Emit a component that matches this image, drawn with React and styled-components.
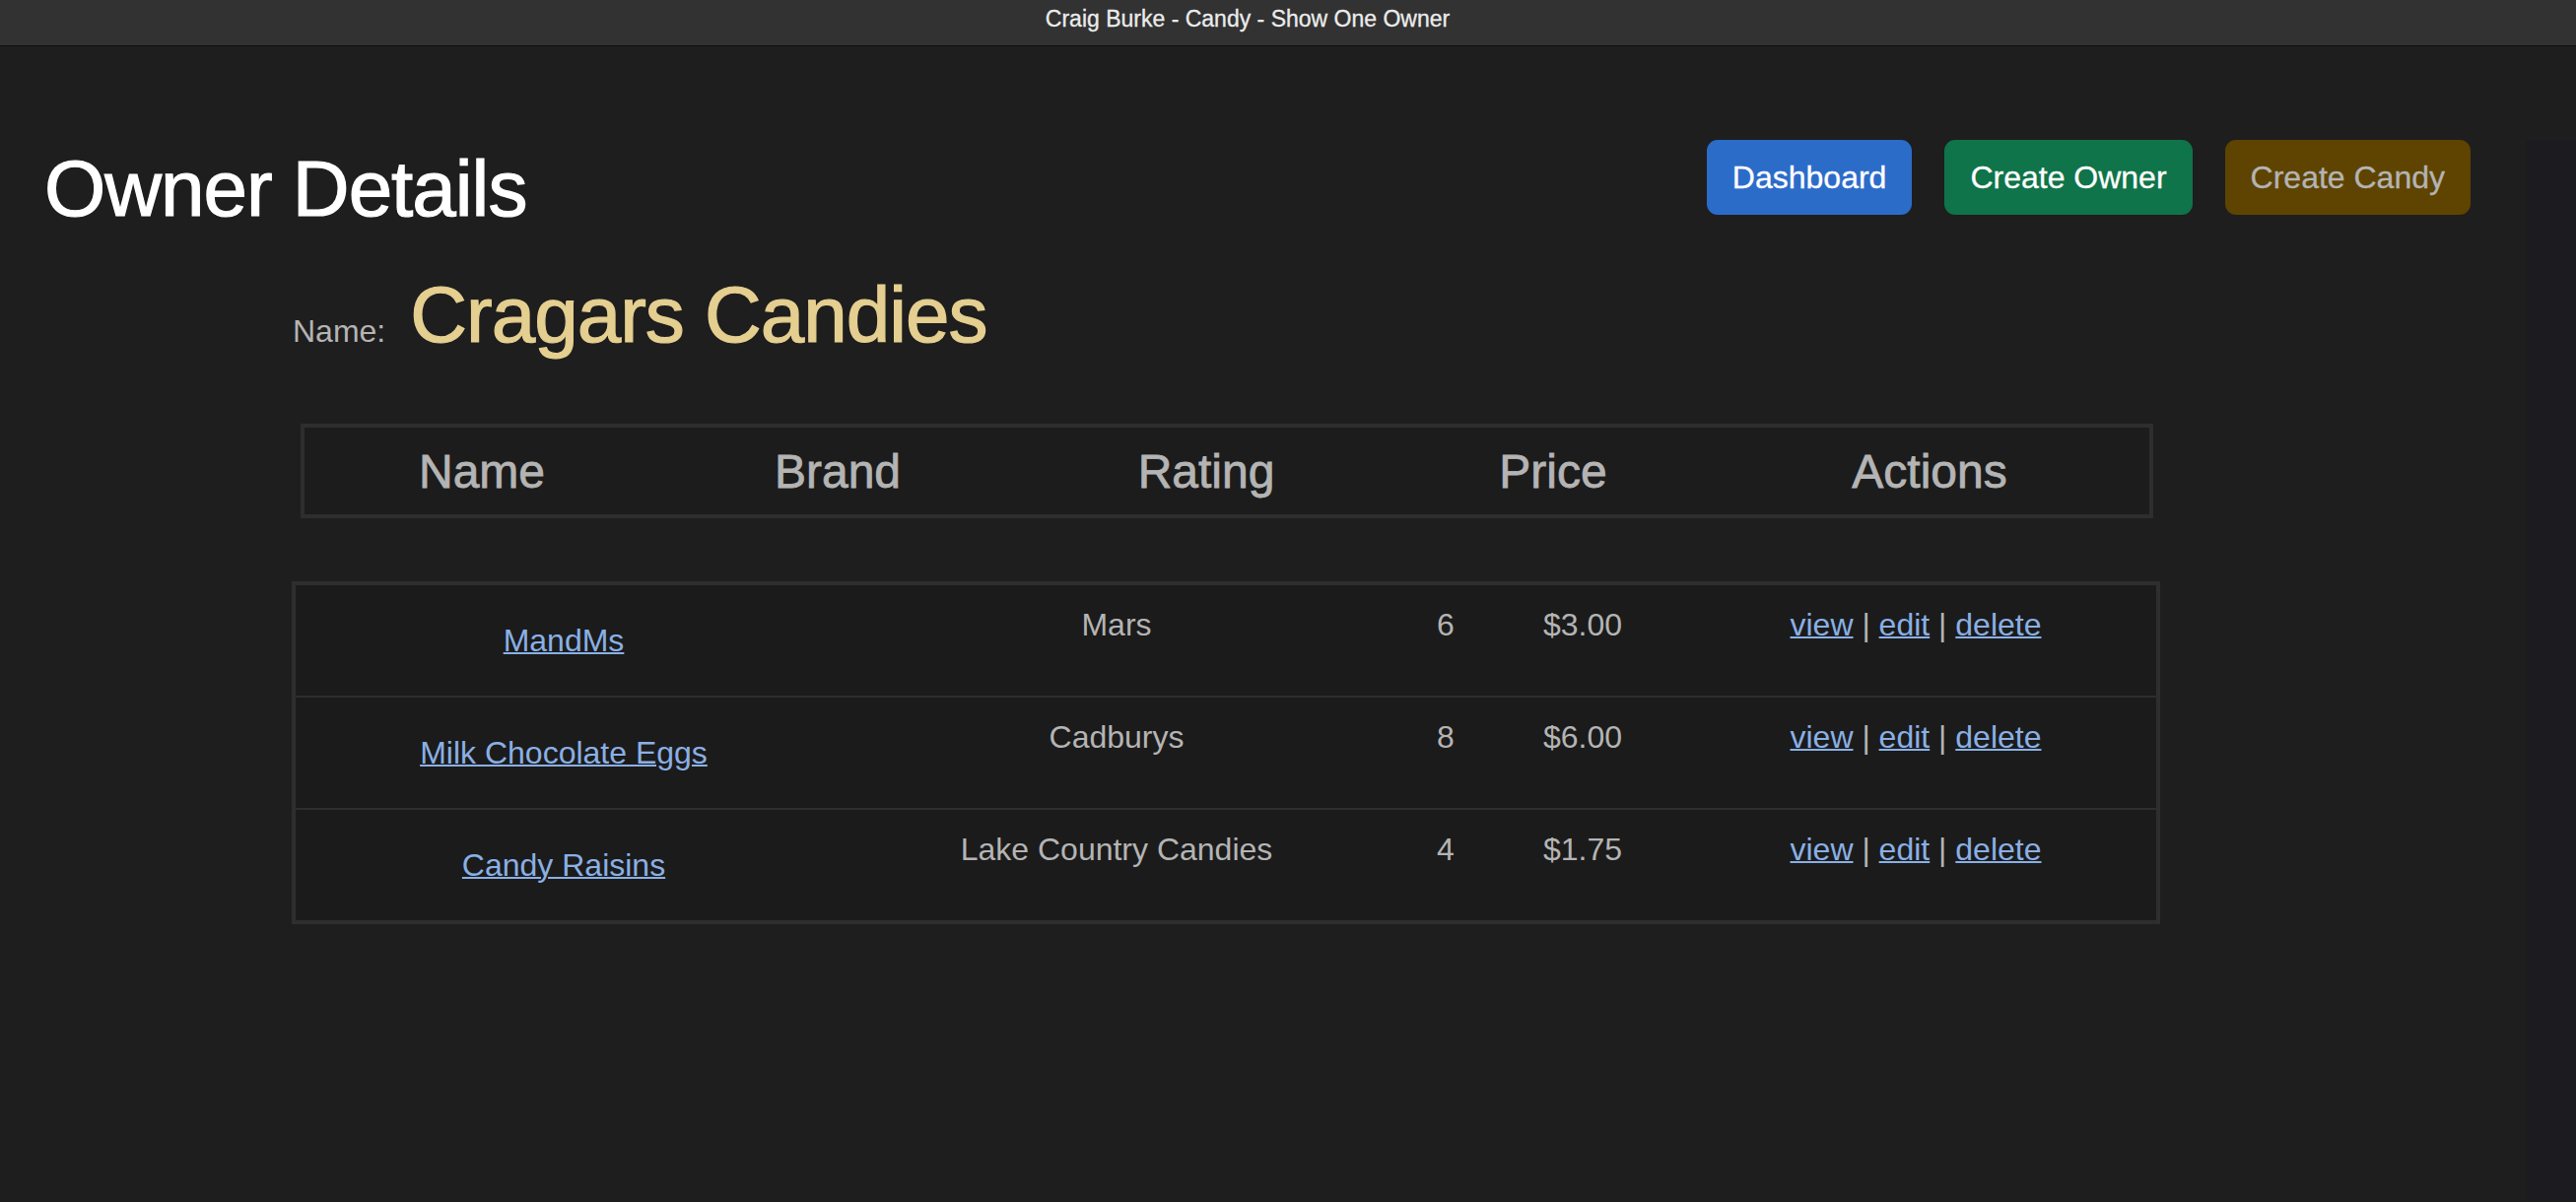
import React from "react";
import styled, { createGlobalStyle } from "styled-components";

const GlobalStyle = createGlobalStyle`
  html, body {
    margin: 0;
    padding: 0;
    background: #1e1e1e;
  }
  body {
    font-family: "Liberation Sans", Arial, sans-serif;
    color: #b4b4b4;
  }
  * { box-sizing: border-box; }
`;

const Page = styled.div`
  min-height: 1220px;
  display: flex;
  flex-direction: column;
  background: #1e1e1e;
`;

const TitleBar = styled.header`
  height: 47px;
  flex: none;
  background: #323232;
  border-bottom: 1px solid #0e0e0e;
  display: flex;
  justify-content: center;
  align-items: flex-start;
  padding-right: 82px;
  font-size: 23px;
  line-height: 38px;
  color: #ececec;
  -webkit-text-stroke: 0.3px #ececec;
`;

const Body = styled.div`
  flex: 1;
  display: flex;
`;

const Main = styled.main`
  flex: 1;
  padding: 95px 56px 0 45px;
`;

const SideStrip = styled.aside`
  width: 51px;
  flex: none;
  margin-top: 95px;
  background: #1c1c20;
`;

const HeaderRow = styled.div`
  display: flex;
  justify-content: space-between;
  align-items: flex-start;
`;

const Title = styled.h1`
  margin: 2px 0 0;
  font-size: 80px;
  line-height: 96px;
  font-weight: 500;
  letter-spacing: -1px;
  color: #ffffff;
  -webkit-text-stroke: 1.2px #ffffff;
`;

const ButtonGroup = styled.nav`
  display: flex;
  gap: 33px;
`;

const variants = {
  primary: { bg: "#2c6cc9", fg: "#ffffff" },
  success: { bg: "#0f7449", fg: "#ffffff" },
  warning: { bg: "#5e4400", fg: "#b4b4b4" },
};

const Button = styled.a`
  display: inline-block;
  padding: 12px 24px;
  border: 2px solid ${(p) => variants[p.$variant].bg};
  border-radius: 11px;
  background: ${(p) => variants[p.$variant].bg};
  color: ${(p) => variants[p.$variant].fg};
  font-size: 32px;
  line-height: 48px;
  text-decoration: none;
  white-space: nowrap;
  -webkit-text-stroke: 0.3px ${(p) => variants[p.$variant].fg};
`;

const NameRow = styled.div`
  margin-top: 32px;
  padding-left: 252px;
  display: flex;
  align-items: baseline;
  gap: 25px;
`;

const NameLabel = styled.span`
  font-size: 32px;
  line-height: 48px;
  color: #b4b4b4;
`;

const NameValue = styled.span`
  font-size: 80px;
  line-height: 96px;
  font-weight: 500;
  letter-spacing: -1px;
  color: #e5cf90;
  -webkit-text-stroke: 1.2px #e5cf90;
`;

const HeadBox = styled.div`
  margin: 62px 0 0 260px;
  width: 1880px;
  height: 96px;
  border: 4px solid #2e2e2e;
  background: #1c1c1c;
  padding-top: 2px;
  display: grid;
  grid-template-columns: 360px 362px 386px 318px 446px;
  align-items: center;
`;

const HeadCell = styled.div`
  font-size: 48px;
  line-height: 57.6px;
  font-weight: 500;
  text-align: center;
  color: #b4b4b4;
  -webkit-text-stroke: 0.8px #b4b4b4;
`;

const Table = styled.div`
  margin: 64px 0 0 251px;
  width: 1896px;
  border: 4px solid #2e2e2e;
  background: #1b1b1b;
`;

const Row = styled.div`
  display: grid;
  grid-template-columns: 544px 578px 90px 188px 488px;
  align-items: center;
  & + & {
    border-top: 2px solid #2e2e2e;
  }
`;

const Cell = styled.div`
  padding: 16px 16px ${(p) => (p.$lift ? "48px" : "16px")};
  text-align: center;
  font-size: 32px;
  line-height: 48px;
  color: #b4b4b4;
  white-space: nowrap;
`;

const Link = styled.a`
  color: #8ab0e4;
  text-decoration: underline;
  text-decoration-thickness: 2px;
  cursor: pointer;
`;

const Sep = styled.span`
  color: #b4b4b4;
`;

const candies = [
  { name: "MandMs", brand: "Mars", rating: 6, price: "$3.00" },
  { name: "Milk Chocolate Eggs", brand: "Cadburys", rating: 8, price: "$6.00" },
  { name: "Candy Raisins", brand: "Lake Country Candies", rating: 4, price: "$1.75" },
];

export default function App() {
  return (
    <Page>
      <GlobalStyle />
      <TitleBar>Craig Burke - Candy - Show One Owner</TitleBar>
      <Body>
        <Main>
          <HeaderRow>
            <Title>Owner Details</Title>
            <ButtonGroup>
              <Button $variant="primary">Dashboard</Button>
              <Button $variant="success">Create Owner</Button>
              <Button $variant="warning">Create Candy</Button>
            </ButtonGroup>
          </HeaderRow>
          <NameRow>
            <NameLabel>Name:</NameLabel>
            <NameValue>Cragars Candies</NameValue>
          </NameRow>
          <HeadBox>
            <HeadCell>Name</HeadCell>
            <HeadCell>Brand</HeadCell>
            <HeadCell>Rating</HeadCell>
            <HeadCell>Price</HeadCell>
            <HeadCell>Actions</HeadCell>
          </HeadBox>
          <Table>
            {candies.map((c) => (
              <Row key={c.name}>
                <Cell>
                  <Link>{c.name}</Link>
                </Cell>
                <Cell $lift>{c.brand}</Cell>
                <Cell $lift>{c.rating}</Cell>
                <Cell $lift>{c.price}</Cell>
                <Cell $lift>
                  <Link>view</Link> <Sep>|</Sep> <Link>edit</Link> <Sep>|</Sep>{" "}
                  <Link>delete</Link>
                </Cell>
              </Row>
            ))}
          </Table>
        </Main>
        <SideStrip />
      </Body>
    </Page>
  );
}
